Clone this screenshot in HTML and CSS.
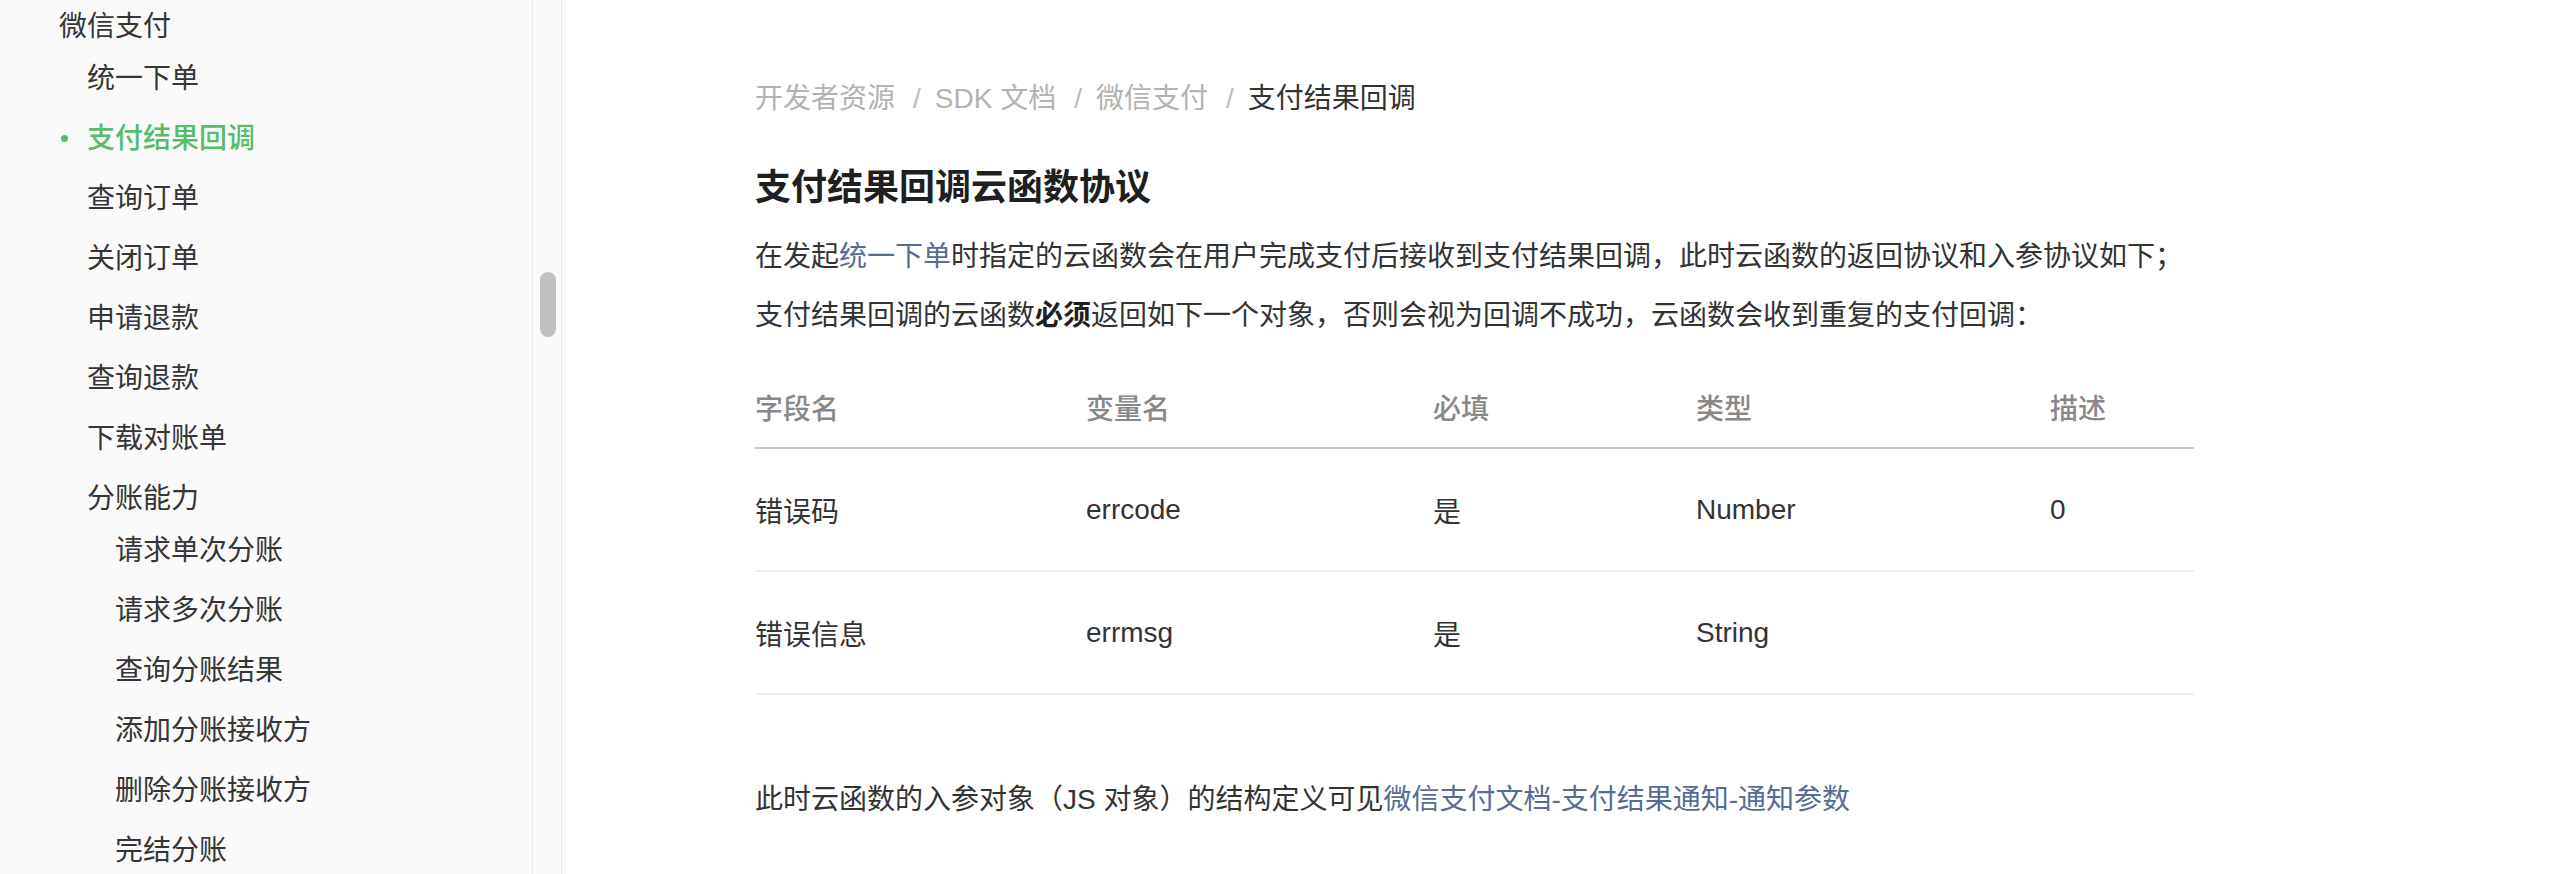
FILE: index.html
```html
<!DOCTYPE html>
<html lang="zh-CN">
<head>
  <meta charset="UTF-8">
  <title>支付结果回调 - SDK 文档</title>
  <link rel="stylesheet" href="styles.css">
</head>
<body>
  <aside class="sidebar">
    <nav class="side-nav">
      <ul class="menu">
        <li class="menu-item">
          <a class="menu-link">微信支付</a>
          <ul class="menu sub">
            <li class="menu-item"><a class="menu-link">统一下单</a></li>
            <li class="menu-item active"><a class="menu-link">支付结果回调</a></li>
            <li class="menu-item"><a class="menu-link">查询订单</a></li>
            <li class="menu-item"><a class="menu-link">关闭订单</a></li>
            <li class="menu-item"><a class="menu-link">申请退款</a></li>
            <li class="menu-item"><a class="menu-link">查询退款</a></li>
            <li class="menu-item"><a class="menu-link">下载对账单</a></li>
            <li class="menu-item">
              <a class="menu-link">分账能力</a>
              <ul class="menu sub">
                <li class="menu-item"><a class="menu-link">请求单次分账</a></li>
                <li class="menu-item"><a class="menu-link">请求多次分账</a></li>
                <li class="menu-item"><a class="menu-link">查询分账结果</a></li>
                <li class="menu-item"><a class="menu-link">添加分账接收方</a></li>
                <li class="menu-item"><a class="menu-link">删除分账接收方</a></li>
                <li class="menu-item"><a class="menu-link">完结分账</a></li>
              </ul>
            </li>
          </ul>
        </li>
      </ul>
    </nav>
    <div class="scroll-track">
      <div class="scroll-thumb"></div>
    </div>
  </aside>

  <main class="content">
    <div class="breadcrumb">
      <span class="crumb">开发者资源</span>
      <span class="sep">/</span>
      <span class="crumb">SDK 文档</span>
      <span class="sep">/</span>
      <span class="crumb">微信支付</span>
      <span class="sep">/</span>
      <span class="crumb current">支付结果回调</span>
    </div>

    <h1 class="page-title">支付结果回调云函数协议</h1>
    <p class="para">在发起<a class="link">统一下单</a>时指定的云函数会在用户完成支付后接收到支付结果回调，此时云函数的返回协议和入参协议如下；</p>
    <p class="para">支付结果回调的云函数<strong>必须</strong>返回如下一个对象，否则会视为回调不成功，云函数会收到重复的支付回调：</p>

    <table class="doc-table">
      <colgroup>
        <col class="col-field">
        <col class="col-var">
        <col class="col-req">
        <col class="col-type">
        <col class="col-desc">
      </colgroup>
      <thead>
        <tr>
          <th>字段名</th>
          <th>变量名</th>
          <th>必填</th>
          <th>类型</th>
          <th>描述</th>
        </tr>
      </thead>
      <tbody>
        <tr>
          <td>错误码</td>
          <td>errcode</td>
          <td>是</td>
          <td>Number</td>
          <td>0</td>
        </tr>
        <tr>
          <td>错误信息</td>
          <td>errmsg</td>
          <td>是</td>
          <td>String</td>
          <td></td>
        </tr>
      </tbody>
    </table>

    <p class="para after-table">此时云函数的入参对象（JS 对象）的结构定义可见<a class="link">微信支付文档-支付结果通知-通知参数</a></p>
  </main>
</body>
</html>
```

FILE: styles.css
```css
* {
  box-sizing: border-box;
  margin: 0;
  padding: 0;
}

body {
  display: flex;
  height: 874px;
  overflow: hidden;
  background: #fff;
  color: #333;
  font-family: "Liberation Sans", "Noto Sans CJK SC", sans-serif;
  font-size: 28px;
}

/* sidebar */
.sidebar {
  display: flex;
  flex: 0 0 562px;
  background: #fafafa;
}

.side-nav {
  flex: 0 0 532px;
  padding: 5px 0 0 59px;
}

.menu {
  list-style: none;
}

.menu.sub {
  padding-left: 28px;
  margin-top: 8px;
}

.menu.sub > .menu-item + .menu-item {
  margin-top: 16px;
}

.menu-item {
  position: relative;
}

.menu-link {
  display: block;
  line-height: 44px;
  color: #353535;
  white-space: nowrap;
}

.menu-item.active > .menu-link {
  color: #56bd6b;
  font-weight: 500;
}

.menu-item.active::before {
  content: "";
  position: absolute;
  left: -26px;
  top: 18px;
  width: 7px;
  height: 7px;
  border-radius: 50%;
  background: #56bd6b;
}

.scroll-track {
  flex: 0 0 30px;
  border-left: 1px solid #e8e8e8;
  border-right: 1px solid #ebebeb;
  padding: 272px 0 0 7px;
}

.scroll-thumb {
  width: 16px;
  height: 65px;
  border-radius: 8px;
  background: #c1c1c1;
}

/* content */
.content {
  flex: 1;
  padding: 78px 0 0 193px;
}

.breadcrumb {
  display: flex;
  line-height: 42px;
  color: #b2b2b2;
  white-space: nowrap;
}

.sep {
  margin: 0 14px 0 18px;
  color: #bdbdbd;
}

.crumb.current {
  color: #333;
}

.page-title {
  margin-top: 41px;
  font-size: 36px;
  line-height: 54px;
  font-weight: 700;
  color: #1f1f1f;
}

.para {
  margin-top: 17px;
  line-height: 42px;
}

.page-title + .para {
  margin-top: 21px;
}

.link {
  color: #576b95;
}

.para strong {
  font-weight: 700;
  color: #1f1f1f;
}

.doc-table {
  width: 1439px;
  margin-top: 30px;
  border-collapse: collapse;
  table-layout: fixed;
}

.col-field { width: 331px; }
.col-var { width: 347px; }
.col-req { width: 263px; }
.col-type { width: 354px; }
.col-desc { width: 144px; }

.doc-table th {
  height: 81px;
  padding: 0;
  text-align: left;
  font-weight: 500;
  color: #888;
  border-bottom: 2px solid #c7c7c7;
}

.doc-table td {
  height: 123px;
  padding: 0;
  color: #333;
  border-bottom: 2px solid #efefef;
}

.para.after-table {
  margin-top: 84px;
}
```
